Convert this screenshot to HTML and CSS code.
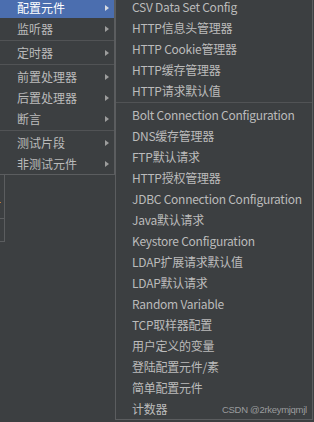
FILE: index.html
```html
<!DOCTYPE html>
<html lang="zh">
<head>
<meta charset="utf-8">
<link rel="stylesheet" href="styles.css">
</head>
<body>
<div class="screen">
  <div class="left-col">
    <ul class="menu main-menu">
      <li class="item active first"><span class="label">配置元件</span><span class="arrow"></span></li>
      <li class="item"><span class="label">监听器</span><span class="arrow"></span></li>
      <li class="sep"></li>
      <li class="item"><span class="label">定时器</span><span class="arrow"></span></li>
      <li class="sep"></li>
      <li class="item"><span class="label">前置处理器</span><span class="arrow"></span></li>
      <li class="item"><span class="label">后置处理器</span><span class="arrow"></span></li>
      <li class="item"><span class="label">断言</span><span class="arrow"></span></li>
      <li class="sep"></li>
      <li class="item"><span class="label">测试片段</span><span class="arrow"></span></li>
      <li class="item"><span class="label">非测试元件</span><span class="arrow"></span></li>
    </ul>
    <div class="stub"><div class="stub-top"><span class="dot"></span></div><div class="stub-bottom"></div></div>
  </div>
  <ul class="menu sub-menu">
    <li class="item first"><span class="label">CSV Data Set Config</span></li>
    <li class="item"><span class="label">HTTP信息头管理器</span></li>
    <li class="item"><span class="label">HTTP Cookie管理器</span></li>
    <li class="item"><span class="label">HTTP缓存管理器</span></li>
    <li class="item"><span class="label">HTTP请求默认值</span></li>
    <li class="sep"></li>
    <li class="item"><span class="label">Bolt Connection Configuration</span></li>
    <li class="item"><span class="label">DNS缓存管理器</span></li>
    <li class="item"><span class="label">FTP默认请求</span></li>
    <li class="item"><span class="label">HTTP授权管理器</span></li>
    <li class="item"><span class="label">JDBC Connection Configuration</span></li>
    <li class="item"><span class="label">Java默认请求</span></li>
    <li class="item"><span class="label">Keystore Configuration</span></li>
    <li class="item"><span class="label">LDAP扩展请求默认值</span></li>
    <li class="item"><span class="label">LDAP默认请求</span></li>
    <li class="item"><span class="label">Random Variable</span></li>
    <li class="item"><span class="label">TCP取样器配置</span></li>
    <li class="item"><span class="label">用户定义的变量</span></li>
    <li class="item"><span class="label">登陆配置元件/素</span></li>
    <li class="item"><span class="label">简单配置元件</span></li>
    <li class="item"><span class="label">计数器</span></li>
  </ul>
  <div class="edge"></div>
  <div class="watermark">CSDN @2rkeymjqmjl</div>
</div>
</body>
</html>
```
FILE: styles.css
```css
* { box-sizing: border-box; }
html, body {
  margin: 0;
  padding: 0;
  width: 314px;
  height: 422px;
  overflow: hidden;
  background: #3c3f41;
}
body {
  font-family: "Noto Sans CJK SC", "Noto Sans", sans-serif;
  font-size: 12px;
  color: #bbbbbb;
}
.screen {
  position: relative;
  display: flex;
  align-items: flex-start;
  width: 314px;
  height: 422px;
}
.left-col {
  width: 115px;
  flex: none;
  display: flex;
  flex-direction: column;
}
.menu {
  list-style: none;
  margin: 0;
  padding: 0;
  background: #3c3f41;
}
.main-menu {
  border-bottom: 1px solid #5b5d5f;
  border-right: 1px solid #5b5d5f;
}
.item {
  height: 21px;
  display: flex;
  align-items: center;
  white-space: nowrap;
  line-height: 14px;
}
.main-menu .item { padding: 0 5px 0 17px; }
.main-menu .item.first { height: 18px; padding-bottom: 3px; }
.main-menu .label { flex: 1; }
.item.active { background: #4b6eaf; color: #ffffff; }
.arrow {
  width: 0;
  height: 0;
  border-top: 3.5px solid transparent;
  border-bottom: 3.5px solid transparent;
  border-left: 4px solid #9d9d9d;
}
.item.active .arrow { border-left-color: #d8dce4; }
.sep {
  height: 3px;
  display: flex;
  align-items: center;
}
.sep::before {
  content: "";
  display: block;
  width: 100%;
  height: 1px;
  background: #515355;
}
.stub {
  width: 5px;
  display: flex;
  flex-direction: column;
}
.stub-top {
  position: relative;
  height: 44px;
  border-right: 1px solid #5b5d5f;
  border-bottom: 1px solid #5b5d5f;
}
.dot {
  position: absolute;
  left: 0;
  top: 27px;
  width: 1px;
  height: 1px;
  background: #c07a3a;
}
.stub-bottom {
  height: 23px;
  border-right: 1px solid #5b5d5f;
  border-bottom: 1px solid #5b5d5f;
}
.sub-menu {
  width: 198px;
  flex: none;
  border-left: 1px solid #5b5d5f;
  border-right: 1px solid #5b5d5f;
  border-bottom: 1px solid #5b5d5f;
}
.sub-menu .item { padding-left: 16px; letter-spacing: -0.25px; }
.sub-menu .item.first { height: 17px; padding-bottom: 3px; }
.edge {
  flex: 1;
  height: 422px;
  background: #3c3f41;
}
.watermark {
  position: absolute;
  left: 222px;
  top: 404px;
  white-space: nowrap;
  font-family: "Liberation Sans", Arial, sans-serif;
  font-size: 9.5px;
  letter-spacing: -0.3px;
  color: #9a9c9e;
}
```
